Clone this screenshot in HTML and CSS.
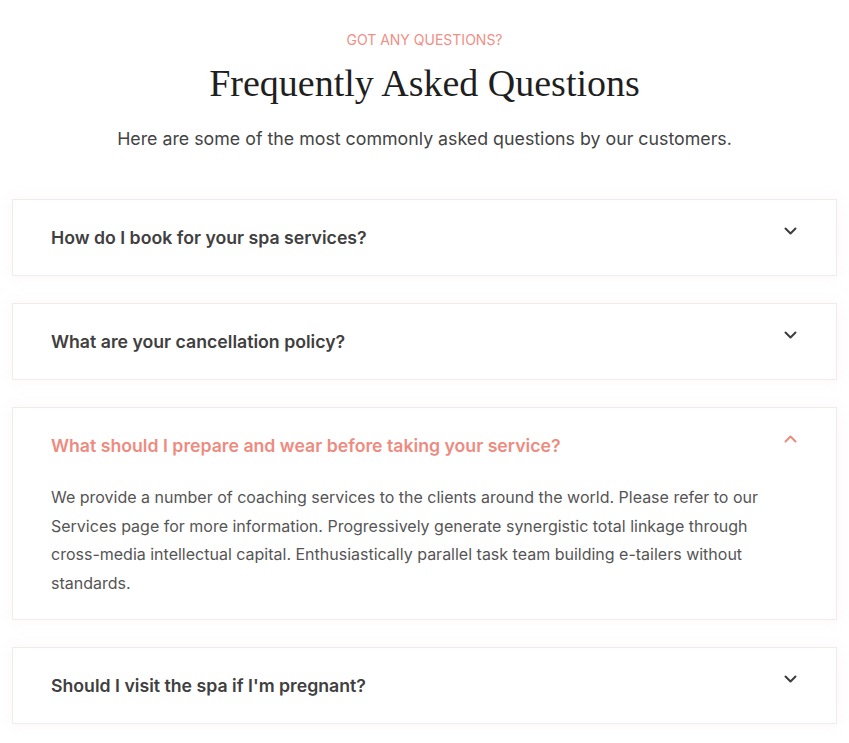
FILE: index.html
```html
<!DOCTYPE html>
<html lang="en">
<head>
    <meta charset="UTF-8">
    <meta name="viewport" content="width=device-width, initial-scale=1.0">
    <title>FAQ</title>
    <link rel="stylesheet" href="styles.css">
</head>
<body>
    <section class="faq">
        <div class="faq-header">
            <p class="eyebrow">GOT ANY QUESTIONS?</p>
            <h2>Frequently Asked Questions</h2>
            <p class="lead">Here are some of the most commonly asked questions by our customers.</p>
        </div>

        <div class="faq-list">
            <div class="faq-item">
                <div class="question">
                    <span>How do I book for your spa services?</span>
                    <svg class="chevron" width="13" height="8" viewBox="0 0 13 8"><path d="M1.5 1.5l5 5 5-5" fill="none" stroke="currentColor" stroke-width="2" stroke-linecap="round" stroke-linejoin="round"/></svg>
                </div>
            </div>

            <div class="faq-item">
                <div class="question">
                    <span>What are your cancellation policy?</span>
                    <svg class="chevron" width="13" height="8" viewBox="0 0 13 8"><path d="M1.5 1.5l5 5 5-5" fill="none" stroke="currentColor" stroke-width="2" stroke-linecap="round" stroke-linejoin="round"/></svg>
                </div>
            </div>

            <div class="faq-item open">
                <div class="question">
                    <span>What should I prepare and wear before taking your service?</span>
                    <svg class="chevron" width="13" height="8" viewBox="0 0 13 8"><path d="M1.5 6.5l5-5 5 5" fill="none" stroke="currentColor" stroke-width="2" stroke-linecap="round" stroke-linejoin="round"/></svg>
                </div>
                <div class="answer">
                    We provide a number of coaching services to the clients around the world. Please refer to our Services page for more information. Progressively generate synergistic total linkage through cross-media intellectual capital. Enthusiastically parallel task team building e-tailers without standards.
                </div>
            </div>

            <div class="faq-item">
                <div class="question">
                    <span>Should I visit the spa if I'm pregnant?</span>
                    <svg class="chevron" width="13" height="8" viewBox="0 0 13 8"><path d="M1.5 1.5l5 5 5-5" fill="none" stroke="currentColor" stroke-width="2" stroke-linecap="round" stroke-linejoin="round"/></svg>
                </div>
            </div>
        </div>
    </section>
</body>
</html>
```

FILE: styles.css
```css
body {
    margin: 0;
    background: #fff;
    font-family: Inter, "Noto Sans", sans-serif;
    color: #3b3b3b;
}

.faq {
    padding: 31px 12px 20px;
}

.faq-header {
    text-align: center;
}

.eyebrow {
    margin: 0;
    font-size: 14px;
    line-height: 18px;
    color: #ef9086;
}

.faq-header h2 {
    margin: 12px 0 0;
    font-family: "Liberation Serif", "DejaVu Serif", serif;
    font-weight: normal;
    font-size: 38px;
    line-height: 44px;
    color: #1f1f1f;
}

.lead {
    margin: 22px 0 0;
    font-size: 17.8px;
    line-height: 24px;
    color: #444;
}

.faq-list {
    display: flex;
    flex-direction: column;
    gap: 27px;
    margin-top: 48px;
}

.faq-item {
    position: relative;
    background: #fff;
    border: 1px solid #f1ecec;
    box-shadow: 0 0 12px rgba(240, 200, 195, 0.18);
}

.question {
    padding: 26px 38px;
    font-size: 17.7px;
    font-weight: 600;
    line-height: 23px;
    color: #404040;
}

.chevron {
    position: absolute;
    top: 27px;
    right: 39px;
    color: #3d3d3d;
}

.open .question,
.open .chevron {
    color: #ee8b80;
}

.answer {
    padding: 0 38px 22px;
    font-size: 16px;
    line-height: 28.5px;
    color: #555;
}
```
